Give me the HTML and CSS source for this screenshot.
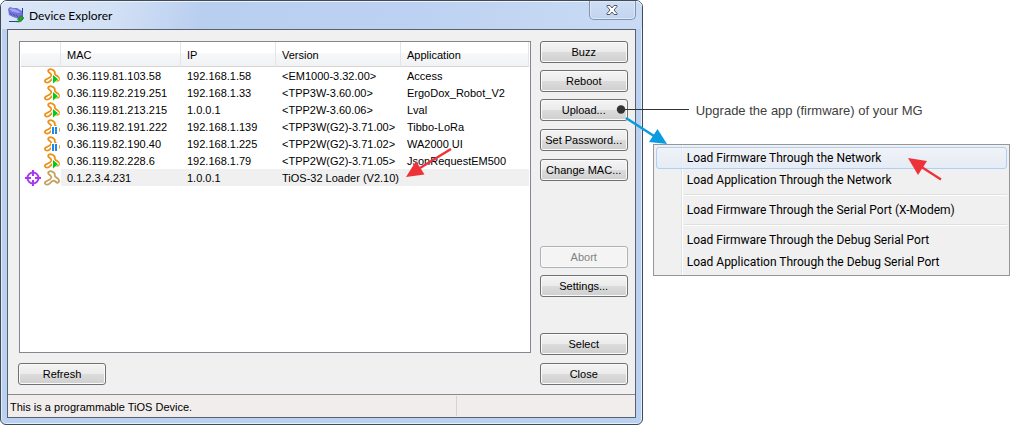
FILE: index.html
```html
<!DOCTYPE html>
<html lang="en">
<head>
<meta charset="utf-8">
<title>Device Explorer</title>
<link rel="stylesheet" href="styles.css">
</head>
<body>
<svg class="defs" aria-hidden="true">
  <defs>
    <symbol id="tibbo" viewBox="0 0 16 16">
      <path d="M4.500 3.800C3.500 2 5.500 .8 7.500 1.300C10 2 11 3.500 10.800 5.300C10.700 6.800 12 7.300 13.500 8.200C15.500 9.500 15.500 12 14 12.700C12 13.300 11.500 10.500 9.500 10.600C7 10.700 6 14.800 3 14.700C.8 14.600 .3 12.500 1.800 11.500C3.500 10.500 6.500 10 7.300 7.500C7.800 5.500 5.500 5.500 4.500 3.800Z" fill="#fff" stroke="currentColor" stroke-width="1.800" stroke-linejoin="round"/>
    </symbol>
    <symbol id="running" viewBox="0 0 16 16">
      <use href="#tibbo"/>
      <path d="M8 6V16L15.500 11Z" fill="#fff"/>
      <path d="M9 7V15.500L14 11.200Z" fill="#0c1"/>
    </symbol>
    <symbol id="paused" viewBox="0 0 16 16">
      <use href="#tibbo"/>
      <path d="M7 7h8v9H7z" fill="#fff"/>
      <path d="M8 8h2v7H8zM11 8h2v7h-2z" fill="#1c8be6"/>
    </symbol>
  </defs>
</svg>
<main class="page">
  <section class="window">
    <header class="titlebar">
      <svg class="app-icon" viewBox="0 0 16 16" aria-hidden="true">
        <path d="M1 14.500H11M14.500 1V13" stroke="#1745b0" stroke-width="1"/>
        <path d="M0 2L2 0L5 1L9 1L14 4L15 10L11 12L5 10L1 8Z" fill="#7272d6"/>
        <path d="M1 2L4 1.500L8 2.500L13 5.500L10 6L4 4.500Z" fill="#a5a5ef"/>
        <path d="M2 6L4 8M5 7L7 9M8 8L10 10" stroke="#4d4db5"/>
        <path d="M7 14.500Q11 15 11.500 12.500H9.500L13 8.500L16 11L14.500 12Q14 16 7 14.500Z" fill="#28a52d" stroke="#12661b" stroke-width=".6"/>
      </svg>
      <h1 class="title">Device Explorer</h1>
      <button class="close" aria-label="Close window">
        <svg viewBox="0 0 12 10" width="12" height="10" aria-hidden="true"><path d="M1 .5H4L6 3L8 .5H11V1.500L8 5L11 8.500V9.500H8L6 7L4 9.500H1V8.500L4 5L1 1.500Z" fill="#fff" stroke="#535666"/></svg>
      </button>
    </header>
    <div class="client">
      <div class="content">
        <div class="main-col">
          <div class="list">
            <table class="devices">
              <colgroup><col class="c-state"><col class="c-mac"><col class="c-ip"><col class="c-version"><col></colgroup>
              <thead><tr><th></th><th>MAC</th><th>IP</th><th>Version</th><th>Application</th></tr></thead>
              <tbody>
                <tr><td class="state"><svg class="icon"><use href="#running"/></svg></td><td>0.36.119.81.103.58</td><td>192.168.1.58</td><td>&lt;EM1000-3.32.00&gt;</td><td>Access</td></tr>
                <tr><td class="state"><svg class="icon"><use href="#running"/></svg></td><td>0.36.119.82.219.251</td><td>192.168.1.33</td><td>&lt;TPP3W-3.60.00&gt;</td><td>ErgoDox_Robot_V2</td></tr>
                <tr><td class="state"><svg class="icon"><use href="#running"/></svg></td><td>0.36.119.81.213.215</td><td>1.0.0.1</td><td>&lt;TPP2W-3.60.06&gt;</td><td>Lval</td></tr>
                <tr><td class="state"><svg class="icon"><use href="#paused"/></svg></td><td>0.36.119.82.191.222</td><td>192.168.1.139</td><td>&lt;TPP3W(G2)-3.71.00&gt;</td><td>Tibbo-LoRa</td></tr>
                <tr><td class="state"><svg class="icon"><use href="#paused"/></svg></td><td>0.36.119.82.190.40</td><td>192.168.1.225</td><td>&lt;TPP2W(G2)-3.71.02&gt;</td><td>WA2000 UI</td></tr>
                <tr><td class="state"><svg class="icon"><use href="#running"/></svg></td><td>0.36.119.82.228.6</td><td>192.168.1.79</td><td>&lt;TPP2W(G2)-3.71.05&gt;</td><td>JsonRequestEM500</td></tr>
                <tr class="selected"><td class="state"><span class="state-icons"><svg class="icon" viewBox="0 0 16 16"><g fill="none" stroke="#a838f0"><circle cx="8" cy="8" r="5.500" stroke-width="2"/><path d="M8 0V6M8 10V16M0 8H6M10 8H16" stroke-width="2"/></g></svg><svg class="icon loader"><use href="#tibbo"/></svg></span></td><td>0.1.2.3.4.231</td><td>1.0.0.1</td><td>TiOS-32 Loader (V2.10)</td><td class="pointed"><svg class="row-arrow" viewBox="0 0 46 30" width="46" height="30" aria-hidden="true"><path d="M45 1L14 20" stroke="#ee3338" stroke-width="2.400"/><path d="M0 29L10 13L18.500 26.500Z" fill="#ee3338"/></svg></td></tr>
              </tbody>
            </table>
          </div>
          <button class="btn">Refresh</button>
        </div>
        <div class="actions">
          <div class="group">
            <button class="btn">Buzz</button>
            <button class="btn">Reboot</button>
            <div class="upload">
              <button class="btn">Upload...</button>
              <svg class="leader" viewBox="0 0 74 50" width="74" height="50" aria-hidden="true">
                <circle cx="5" cy="10.500" r="4.200" fill="#333"/><path d="M5 10.500H73" stroke="#333"/>
                <path d="M10 19L38 37" stroke="#0a9be0" stroke-width="2.600"/><path d="M51 45L41.500 30L33 43Z" fill="#0a9be0"/>
              </svg>
            </div>
          </div>
          <div class="group wide">
            <button class="btn">Set Password...</button>
            <button class="btn">Change MAC...</button>
          </div>
          <div class="group lower">
            <button class="btn" disabled>Abort</button>
            <button class="btn">Settings...</button>
          </div>
          <div class="group wide bottom">
            <button class="btn">Select</button>
            <button class="btn">Close</button>
          </div>
        </div>
      </div>
      <footer class="status"><span class="status-text">This is a programmable TiOS Device.</span><span class="status-pane"></span></footer>
    </div>
  </section>
  <aside class="side">
    <p class="note">Upgrade the app (firmware) of your MG</p>
    <div class="menu" role="menu">
      <button class="item active" role="menuitem">Load Firmware Through the Network
        <svg class="item-arrow" viewBox="0 0 34 24" width="34" height="24" aria-hidden="true"><path d="M33 22.500L12 9" stroke="#ee3338" stroke-width="2.400"/><path d="M0 1L19 4L10 18Z" fill="#ee3338"/></svg>
      </button>
      <button class="item" role="menuitem">Load Application Through the Network</button>
      <hr class="sep">
      <button class="item" role="menuitem">Load Firmware Through the Serial Port (X-Modem)</button>
      <hr class="sep">
      <button class="item" role="menuitem">Load Firmware Through the Debug Serial Port</button>
      <button class="item" role="menuitem">Load Application Through the Debug Serial Port</button>
    </div>
  </aside>
</main>
</body>
</html>
```
FILE: styles.css
```css
* { box-sizing: border-box; }
body {
  margin: 0;
  background: #fff;
  color: #000;
  font: 11px/17px "Liberation Sans", Arial, sans-serif;
}
button { font: inherit; color: inherit; }
.defs { position: absolute; width: 0; height: 0; }
.page {
  display: grid;
  grid-template-columns: 7fr 4fr;
  min-height: 100vh;
}

.window {
  display: flex;
  flex-direction: column;
  padding: 0 6px 6px;
  border: 1px solid #424a57;
  border-radius: 7px 7px 6px 6px;
  background: #bad1f1;
  box-shadow: inset 0 0 0 1px #e4effb;
}
.titlebar {
  display: flex;
  align-items: center;
  gap: 5px;
  height: 28px;
  margin: 0 -6px;
  padding: 0 6px 0 7px;
  border-radius: 6px 6px 0 0;
  background: linear-gradient(100deg, #dbe7f7 0, #d3e1f5 110px, #b9cff0 200px, #bdd2f2 65%, #c9dbf4 100%);
  box-shadow: inset 0 1px #eaf3fd;
}
.app-icon { width: 16px; height: 16px; }
.title {
  flex: 1;
  margin: 0;
  font: 12px/17px Lato, "Open Sans", sans-serif;
}
.close {
  display: flex;
  align-items: center;
  justify-content: center;
  align-self: flex-start;
  width: 47px;
  height: 19px;
  padding: 0;
  border: 1px solid #8493ab;
  border-top: 0;
  border-radius: 0 0 5px 5px;
  background: linear-gradient(#cfdef4, #c1d4f0);
  box-shadow: inset 0 0 0 1px #dbe8f9;
}

.client {
  flex: 1;
  display: flex;
  flex-direction: column;
  border: 1px solid #59616d;
  background: #f0f0f0;
}
.content {
  flex: 1;
  display: flex;
  gap: 9px;
  padding: 11px 7px 9px 10px;
}
.main-col { flex: 1; display: flex; flex-direction: column; gap: 10px; min-width: 0; }
.list {
  flex: 1;
  margin-left: 1px;
  padding: 0 1px;
  border: 1px solid #828790;
  background: #fff;
}
.devices { width: 100%; border-collapse: separate; border-spacing: 0; table-layout: fixed; }
.c-state { width: 40px; }
.c-mac { width: 120px; }
.c-ip { width: 95px; }
.c-version { width: 125px; }
.devices th, .devices td { text-align: left; font-weight: 400; white-space: nowrap; }
.devices th {
  height: 25px;
  padding: 2px 6px 0;
  border-right: 1px solid #e3e5e8;
  border-bottom: 1px solid #d5d5d5;
  background: linear-gradient(#fff 45%, #f6f7f8 50%, #f1f2f4);
}
.devices td { height: 17px; padding: 1px 6px 0; line-height: 16px; }
.devices .state { padding: 0 1px 0 4px; background: #fff; }
.state-icons { display: flex; justify-content: space-between; }
.icon { display: block; width: 16px; height: 16px; margin-left: auto; color: #ec9016; }
.state-icons .icon { margin: 0; }
.devices .icon.loader { color: #c4a05c; }
.selected td { background: #f0f0f0; }
.pointed { position: relative; }
.row-arrow { position: absolute; left: 5px; bottom: 8px; }

.btn {
  display: block;
  width: 88px;
  height: 22px;
  padding: 0;
  border: 1px solid #707070;
  border-radius: 3px;
  background: linear-gradient(#f4f4f4, #ebebeb 48%, #dcdcdc 50%, #cfcfcf);
  box-shadow: inset 0 0 0 1px #fafafa;
  line-height: 18px;
}
.btn:disabled { border-color: #adb2b5; background: #f4f4f4; color: #838383; }
.actions { display: flex; flex-direction: column; }
.group { display: grid; gap: 7px; }
.wide { gap: 8px; margin-top: 8px; }
.lower { margin-top: 65px; }
.bottom { margin-top: auto; }
.upload { position: relative; }
.leader { position: absolute; left: 76px; top: 0; z-index: 2; pointer-events: none; }

.status {
  display: flex;
  height: 23px;
  padding: 1px;
  border-top: 1px solid #8a8a8a;
  background: #f1edec;
  line-height: 22px;
}
.status-text { flex: 1; padding-left: 1px; }
.status-pane { width: 178px; border-left: 1px solid #d6d2d1; }

.side { padding-left: 10px; }
.note {
  margin: 102px 0 25px;
  padding-left: 43px;
  color: #404040;
  font-size: 13px;
  line-height: 17px;
}
.menu {
  padding: 2px;
  border: 1px solid #979797;
  background: linear-gradient(90deg, transparent 27px, #e2e3e3 27px 28px, #fff 28px 29px, transparent 29px) #f0f0f0;
}
.item {
  display: block;
  position: relative;
  width: 100%;
  height: 22px;
  padding: 0 0 0 30px;
  border: 1px solid transparent;
  border-radius: 3px;
  background: none;
  text-align: left;
  white-space: nowrap;
  font: 12px/18px Roboto, "Open Sans", sans-serif;
}
.active { border-color: #aecff7; background: linear-gradient(#f0f3f8cc, #e3ebf6cc); }
.item-arrow { position: absolute; left: 251px; top: 9px; }
.sep {
  height: 2px;
  margin: 3px 0 3px 28px;
  border: 0;
  border-top: 1px solid #e0e0e0;
  background: #fff;
}
```
